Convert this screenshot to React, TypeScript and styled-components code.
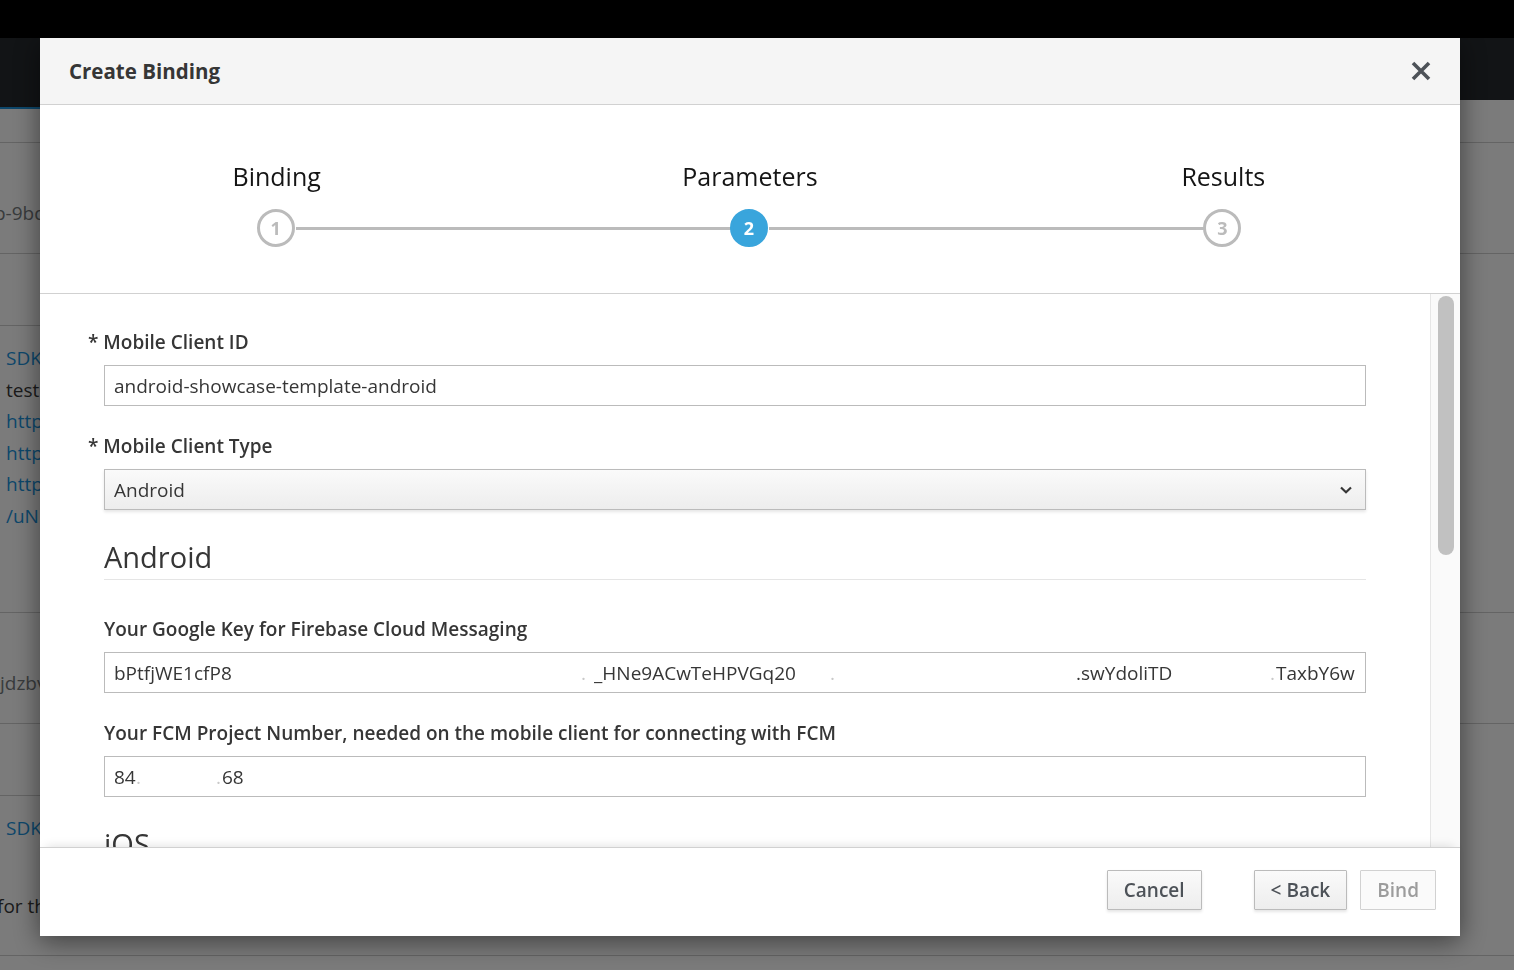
import React from "react";
import styled, {createGlobalStyle} from "styled-components";

//region Types
type StepState = "active" | "idle";

type Chunk = {
    x: number,
    text: string,
    faint?: boolean,
    clip?: number
}
//endregion

//region Global
const GlobalStyle = createGlobalStyle`
    html, body {
        margin: 0;
        padding: 0;
        height: 100%;
        overflow: hidden;
    }

    body {
        font-family: "Open Sans", "Liberation Sans", sans-serif;
        background: #f6f6f6;
    }

    * {
        box-sizing: border-box;
    }
`;
//endregion

//region Styled: page behind the modal
const Page = styled.div`
    width: 1514px;
    height: 970px;
    display: flex;
    flex-direction: column;
    background: #f6f6f6;
    overflow: hidden;
`;

const TopBar = styled.div`
    flex: none;
    height: 38px;
    background: #000;
`;

const Masthead = styled.div`
    flex: none;
    height: 62px;
    background: #24282c;
`;

const TabStrip = styled.div`
    flex: none;
    height: 43px;
    border-bottom: 1px solid #c8c8c8;
`;

const ActiveTab = styled.div`
    width: 260px;
    height: 9px;
    background: #24282c;
    border-bottom: 2px solid #1a8fd6;
`;

const BgRow = styled.div<{ $h?: number }>`
    flex: ${props => props.$h ? "none" : "1"};
    height: ${props => props.$h ? `${props.$h}px` : "auto"};
    border-bottom: ${props => props.$h ? "1px solid #c8c8c8" : "none"};
    display: flex;
    flex-direction: column;
`;

const SubBlock = styled.div`
    flex: none;
    width: 400px;
    height: 72px;
    border-bottom: 1px solid #c8c8c8;
`;

const BgText = styled.div<{ $indent: number, $link?: boolean, $muted?: boolean, $top?: number }>`
    margin-left: ${props => props.$indent}px;
    margin-top: ${props => props.$top || 0}px;
    font-size: 19px;
    line-height: 26px;
    white-space: nowrap;
    color: ${props => props.$link ? "#1a8fd6" : props.$muted ? "#727679" : "#363636"};
`;

const BgList = styled.div`
    display: flex;
    flex-direction: column;
    padding: 17px 0 0 6px;

    ${BgText} {
        line-height: 31.6px;
        margin: 0;
    }
`;
//endregion

//region Styled: modal
const Backdrop = styled.div`
    position: fixed;
    inset: 0;
    background: rgba(0, 0, 0, 0.5);
`;

const ModalLayer = styled.div`
    position: fixed;
    inset: 0;
    display: flex;
    align-items: flex-start;
    padding: 38px 0 0 40px;
`;

const Dialog = styled.div`
    width: 1420px;
    height: 898px;
    background: #fff;
    display: flex;
    flex-direction: column;
    box-shadow: 0 5px 25px rgba(0, 0, 0, 0.5);
`;

const Header = styled.div`
    flex: none;
    height: 67px;
    background: #f5f5f5;
    border-bottom: 1px solid #d1d1d1;
    display: flex;
    align-items: center;
    justify-content: space-between;
    padding: 0 28px 1px 29px;
`;

const Title = styled.h4`
    margin: 0;
    font-size: 20.5px;
    font-weight: 700;
    color: #363636;
`;

const CloseButton = styled.div`
    width: 22px;
    height: 22px;
    display: flex;
    align-items: center;
    justify-content: center;
    cursor: pointer;
`;

const Steps = styled.div`
    flex: none;
    height: 189px;
    border-bottom: 1px solid #d1d1d1;
    display: grid;
    grid-template-columns: repeat(3, 1fr);
    padding-top: 54px;
`;

const Step = styled.div`
    display: flex;
    flex-direction: column;
`;

const StepLabel = styled.div`
    text-align: center;
    font-size: 25px;
    line-height: 34px;
    color: #151515;
    margin-bottom: 16px;
`;

const Track = styled.div`
    display: flex;
    align-items: center;
`;

const Segment = styled.div<{ $on: boolean }>`
    flex: 1;
    height: 3px;
    background: ${props => props.$on ? "#bbb" : "transparent"};
`;

const Circle = styled.div<{ $state: StepState }>`
    flex: none;
    width: 38px;
    height: 38px;
    margin: 0 1px 0 -1px;
    border-radius: 50%;
    border: 3px solid ${props => props.$state === "active" ? "#39a5dc" : "#bbb"};
    background: ${props => props.$state === "active" ? "#39a5dc" : "#fff"};
    color: ${props => props.$state === "active" ? "#fff" : "#bbb"};
    display: flex;
    align-items: center;
    justify-content: center;
    font-size: 18px;
    font-weight: 700;
`;

const Body = styled.div`
    flex: 1;
    min-height: 0;
    display: flex;
`;

const Content = styled.div`
    flex: 1;
    overflow: hidden;
    padding: 35px 64px 0;
`;

const ScrollTrack = styled.div`
    flex: none;
    width: 30px;
    border-left: 1px solid #e6e6e6;
    background: #fafafa;
    padding: 2px 6px 0 7px;
`;

const ScrollThumb = styled.div`
    height: 259px;
    border-radius: 8px;
    background: #c1c1c1;
`;

const FormGroup = styled.div<{ $space?: number }>`
    margin-bottom: ${props => props.$space ?? 27}px;
`;

const FieldLabel = styled.div<{ $required?: boolean }>`
    margin: 0 0 10px ${props => props.$required ? "-16px" : "0"};
    font-size: 19px;
    font-weight: 600;
    line-height: 26px;
    color: #363636;
    white-space: nowrap;
`;

const TextBox = styled.div`
    height: 41px;
    border: 1px solid #bbb;
    padding: 0 9px;
    display: flex;
    align-items: center;
    font-size: 19px;
    color: #363636;
    white-space: nowrap;
    overflow: hidden;
`;

const SelectBox = styled(TextBox)`
    justify-content: space-between;
    padding-right: 13px;
    background: linear-gradient(to bottom, #fafafa 0%, #ededed 100%);
    box-shadow: 0 2px 3px rgba(3, 3, 3, 0.1);
    cursor: pointer;
`;

const KeyChunk = styled.span<{ $w?: number, $faint?: boolean }>`
    flex: ${props => props.$w !== undefined ? "none" : "0 1 auto"};
    display: block;
    width: ${props => props.$w !== undefined ? `${props.$w}px` : "auto"};
    overflow: hidden;
    color: ${props => props.$faint ? "#c9c9c9" : "#363636"};
`;

const SectionHeading = styled.h3<{ $space?: number }>`
    margin: 0 0 ${props => props.$space ?? 36}px;
    padding-bottom: 2px;
    font-size: 29px;
    font-weight: 400;
    line-height: 40px;
    color: #363636;
    border-bottom: 1px solid #e5e5e5;
`;

const Footer = styled.div`
    flex: none;
    position: relative;
    z-index: 1;
    height: 89px;
    border-top: 1px solid #d1d1d1;
    box-shadow: 0 -6px 10px -6px rgba(0, 0, 0, 0.14);
    background: #fff;
    display: flex;
    align-items: flex-start;
    justify-content: flex-end;
    gap: 13px;
    padding: 22px 24px 0 0;
`;

const Button = styled.button<{ $spaced?: boolean }>`
    height: 40px;
    padding: 0 16px;
    margin-right: ${props => props.$spaced ? "39px" : "0"};
    font-family: inherit;
    font-size: 19px;
    font-weight: 600;
    color: #4d5258;
    border: 1px solid #bbb;
    border-radius: 1px;
    background: linear-gradient(to bottom, #fafafa 0%, #ededed 100%);
    box-shadow: 0 2px 3px rgba(3, 3, 3, 0.1);
    cursor: pointer;

    &:disabled {
        color: #9c9c9c;
        border-color: #d1d1d1;
        background: #fafafa;
        box-shadow: none;
        cursor: default;
    }
`;
//endregion

//region Data
const steps: { label: string, state: StepState }[] = [
    {label: "Binding", state: "idle"},
    {label: "Parameters", state: "active"},
    {label: "Results", state: "idle"}
];

const googleKey: Chunk[] = [
    {x: 0, text: "bPtfjWE1cfP8"},
    {x: 467, text: ".", faint: true},
    {x: 480, text: "_HNe9ACwTeHPVGq20", clip: 203},
    {x: 716, text: ".", faint: true},
    {x: 962, text: ".swYdoliTD"},
    {x: 1156, text: ".", faint: true},
    {x: 1162, text: "TaxbY6w"}
];

const projectNumber: Chunk[] = [
    {x: 0, text: "84"},
    {x: 22, text: ".", faint: true},
    {x: 102, text: ".", faint: true},
    {x: 108, text: "68"}
];
//endregion

const ChunkedValue = ({chunks}: { chunks: Chunk[] }) => (
    <>
        {chunks.map((chunk, i) => {
            const next = chunks[i + 1];
            const room = next ? next.x - chunk.x : undefined;
            if (chunk.clip && room) {
                return (
                    <KeyChunk key={i} $w={room}>
                        <KeyChunk $w={chunk.clip}>{chunk.text}</KeyChunk>
                    </KeyChunk>
                );
            }
            return <KeyChunk key={i} $w={room} $faint={chunk.faint}>{chunk.text}</KeyChunk>;
        })}
    </>
);

const CloseIcon = () => (
    <svg width="22" height="22" viewBox="0 0 22 22">
        <path d="M3 3 L19 19 M19 3 L3 19" stroke="#4d5258" strokeWidth="3.6" fill="none"/>
    </svg>
);

const Chevron = () => (
    <svg width="12" height="8" viewBox="0 0 12 8">
        <polyline points="1,1.5 6,6.2 11,1.5" stroke="#363636" strokeWidth="2.2" fill="none"/>
    </svg>
);

const BackgroundPage = () => (
    <Page>
        <TopBar/>
        <Masthead/>
        <TabStrip>
            <ActiveTab/>
        </TabStrip>
        <BgRow $h={111}>
            <BgText $indent={-6} $muted $top={57}>b-9bqk2x7</BgText>
        </BgRow>
        <BgRow $h={359}>
            <SubBlock/>
            <BgList>
                <BgText $indent={0} $link>SDK Config</BgText>
                <BgText $indent={0}>test</BgText>
                <BgText $indent={0} $link>https://</BgText>
                <BgText $indent={0} $link>https://</BgText>
                <BgText $indent={0} $link>https://</BgText>
                <BgText $indent={0} $link>/uN</BgText>
            </BgList>
        </BgRow>
        <BgRow $h={111}>
            <BgText $indent={0} $muted $top={57}>jdzbv</BgText>
        </BgRow>
        <BgRow $h={232}>
            <SubBlock/>
            <BgText $indent={6} $link $top={19}>SDK Config</BgText>
            <BgText $indent={-3} $top={52}>for the</BgText>
        </BgRow>
        <BgRow/>
    </Page>
);

const App = () => {
    return (
        <>
            <GlobalStyle/>
            <BackgroundPage/>
            <Backdrop/>
            <ModalLayer>
                <Dialog>
                    <Header>
                        <Title>Create Binding</Title>
                        <CloseButton>
                            <CloseIcon/>
                        </CloseButton>
                    </Header>
                    <Steps>
                        {steps.map((step, i) => (
                            <Step key={step.label}>
                                <StepLabel>{step.label}</StepLabel>
                                <Track>
                                    <Segment $on={i > 0}/>
                                    <Circle $state={step.state}>{i + 1}</Circle>
                                    <Segment $on={i < steps.length - 1}/>
                                </Track>
                            </Step>
                        ))}
                    </Steps>
                    <Body>
                        <Content>
                            <FormGroup>
                                <FieldLabel $required>* Mobile Client ID</FieldLabel>
                                <TextBox>android-showcase-template-android</TextBox>
                            </FormGroup>
                            <FormGroup>
                                <FieldLabel $required>* Mobile Client Type</FieldLabel>
                                <SelectBox>
                                    Android
                                    <Chevron/>
                                </SelectBox>
                            </FormGroup>
                            <SectionHeading>Android</SectionHeading>
                            <FormGroup>
                                <FieldLabel>Your Google Key for Firebase Cloud Messaging</FieldLabel>
                                <TextBox>
                                    <ChunkedValue chunks={googleKey}/>
                                </TextBox>
                            </FormGroup>
                            <FormGroup>
                                <FieldLabel>Your FCM Project Number, needed on the mobile client for connecting with FCM</FieldLabel>
                                <TextBox>
                                    <ChunkedValue chunks={projectNumber}/>
                                </TextBox>
                            </FormGroup>
                            <SectionHeading>iOS</SectionHeading>
                        </Content>
                        <ScrollTrack>
                            <ScrollThumb/>
                        </ScrollTrack>
                    </Body>
                    <Footer>
                        <Button $spaced>Cancel</Button>
                        <Button>&lt; Back</Button>
                        <Button disabled>Bind</Button>
                    </Footer>
                </Dialog>
            </ModalLayer>
        </>
    );
};

export default App;
